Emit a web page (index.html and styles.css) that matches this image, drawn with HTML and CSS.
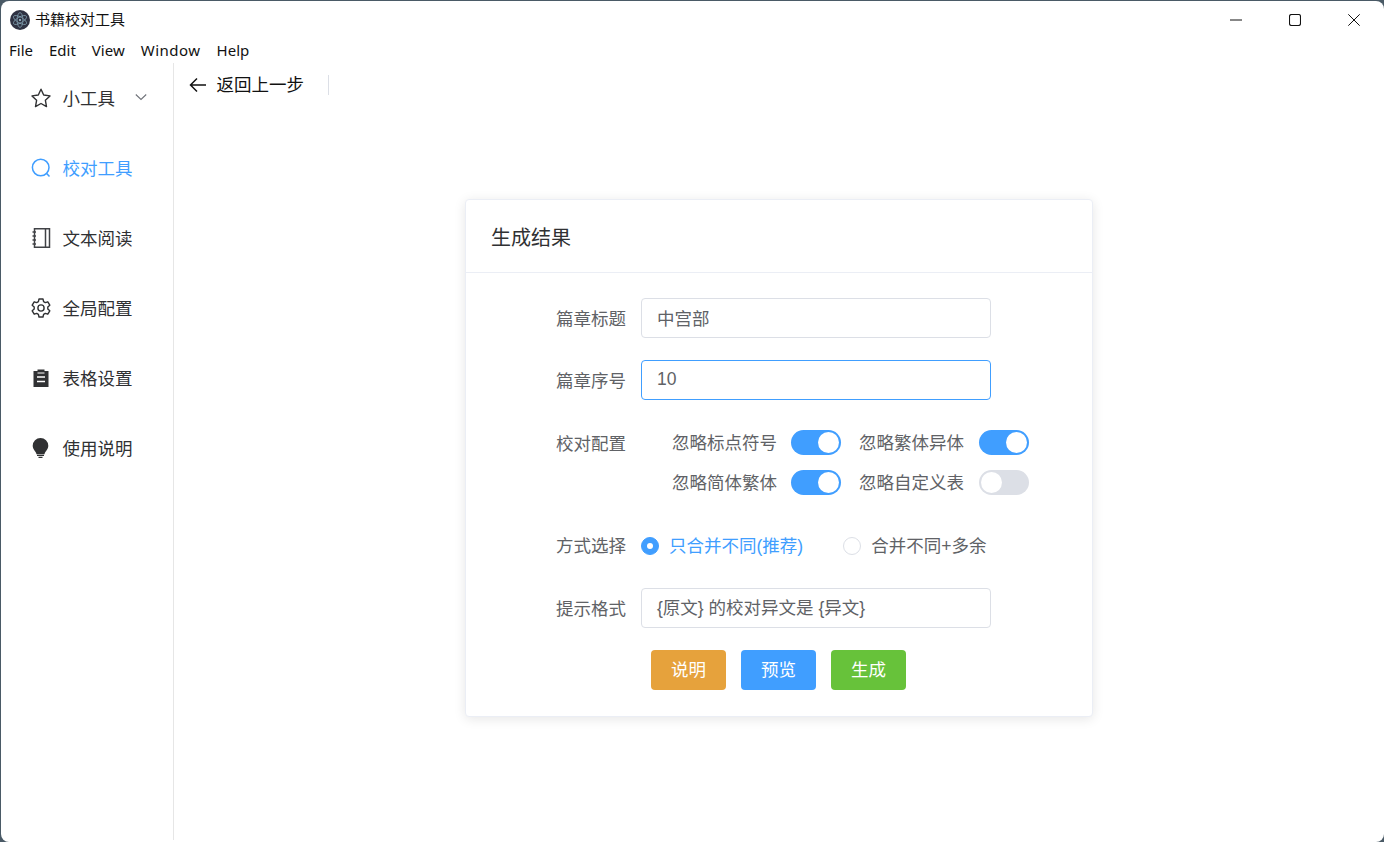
FILE: index.html
```html
<!DOCTYPE html>
<html lang="zh">
<head>
<meta charset="utf-8">
<title>书籍校对工具</title>
<link rel="stylesheet" href="styles.css">
</head>
<body>
<div class="window">
  <header class="titlebar">
    <svg class="app-logo" viewBox="0 0 20 20" width="20" height="20">
      <circle cx="10" cy="10" r="10" fill="#2f3242"/>
      <g fill="none" stroke="#7f9cac" stroke-width="0.8">
        <ellipse cx="10" cy="10" rx="7.400" ry="2.900" transform="rotate(30 10 10)"/>
        <ellipse cx="10" cy="10" rx="7.400" ry="2.900" transform="rotate(-30 10 10)"/>
        <ellipse cx="10" cy="10" rx="7.400" ry="2.900" transform="rotate(90 10 10)"/>
      </g>
      <circle cx="10" cy="10" r="1.100" fill="#a4c6d6"/>
    </svg>
    <span class="app-title">书籍校对工具</span>
    <div class="win-controls">
      <button class="win-btn" aria-label="minimize"><svg viewBox="0 0 12 12" width="12" height="12"><path d="M0 6h12" stroke="#111" stroke-width="1" fill="none"/></svg></button>
      <button class="win-btn" aria-label="maximize"><svg viewBox="0 0 12 12" width="12" height="12"><rect x=".5" y=".5" width="11" height="11" rx="2" stroke="#111" stroke-width="1.100" fill="none"/></svg></button>
      <button class="win-btn" aria-label="close"><svg viewBox="0 0 12 12" width="12" height="12"><path d="M.3.3l11.400 11.400M11.700.3L.3 11.700" stroke="#111" stroke-width="1" fill="none"/></svg></button>
    </div>
  </header>
  <nav class="menubar">
    <span class="menubar-item">File</span>
    <span class="menubar-item">Edit</span>
    <span class="menubar-item">View</span>
    <span class="menubar-item wide">Window</span>
    <span class="menubar-item">Help</span>
  </nav>
  <div class="app-body">
    <aside class="sidebar">
      <div class="side-item">
        <svg class="side-icon" viewBox="0 0 20 20"><path d="M10 1.200l2.700 5.800 6.300.9-4.600 4.400 1.100 6.300-5.500-3.100-5.500 3.100 1.100-6.300L1 7.900l6.300-.9z" fill="none" stroke="#303133" stroke-width="1.400" stroke-linejoin="round"/></svg>
        <span class="side-text">小工具</span>
        <svg class="chevron" viewBox="0 0 12 12"><path d="M.8 3.500l5.200 5 5.200-5" fill="none" stroke="#70737a" stroke-width="1.100"/></svg>
      </div>
      <div class="side-item active">
        <svg class="side-icon" viewBox="0 0 20 20"><circle cx="9.700" cy="9.500" r="8.300" fill="none" stroke="#409eff" stroke-width="1.500"/><path d="M15.700 15.500l2.800 3" stroke="#409eff" stroke-width="1.500" fill="none"/></svg>
        <span class="side-text">校对工具</span>
      </div>
      <div class="side-item">
        <svg class="side-icon" viewBox="0 0 20 20"><path d="M3.500.8h15v18.400h-15z M14.500.8v18.400" fill="none" stroke="#404246" stroke-width="1.500"/><path d="M1.500 4h3.500M1.500 8h3.500M1.500 12h3.500M1.500 16h3.500" stroke="#404246" stroke-width="1.300"/></svg>
        <span class="side-text">文本阅读</span>
      </div>
      <div class="side-item">
        <svg class="side-icon" viewBox="0 0 20 20"><path d="M8 1h4l.6 2.600 1.700 1 2.500-.8 2 3.400-2 1.800v2l2 1.800-2 3.400-2.500-.8-1.700 1L12 19H8l-.6-2.600-1.700-1-2.500.8-2-3.400 2-1.800V9L1.200 7.200l2-3.400 2.500.8 1.700-1z" fill="none" stroke="#303133" stroke-width="1.400" stroke-linejoin="round"/><circle cx="10" cy="10" r="3.100" fill="none" stroke="#303133" stroke-width="1.400"/></svg>
        <span class="side-text">全局配置</span>
      </div>
      <div class="side-item">
        <svg class="side-icon" viewBox="0 0 20 20"><path d="M6.500 1.500h7v1.500h4v16h-15V3h4z" fill="#303133"/><path d="M6 9h8M6 13.500h8" stroke="#fff" stroke-width="1.600"/><path d="M6.500 5h7" stroke="#fff" stroke-width="1"/></svg>
        <span class="side-text">表格设置</span>
      </div>
      <div class="side-item">
        <svg class="side-icon" viewBox="0 0 20 20"><path d="M9.500 0a7.800 7.800 0 0 1 7.800 7.800c0 3.700-3.100 5.400-3.800 8.400h-8C4.800 13.200 1.700 11.500 1.700 7.800A7.800 7.800 0 0 1 9.500 0z" fill="#303133"/><path d="M6 17.300h7M7.500 19.300h4" stroke="#303133" stroke-width="1.200"/></svg>
        <span class="side-text">使用说明</span>
      </div>
    </aside>
    <main class="content">
      <div class="page-header">
        <svg class="back-arrow" viewBox="0 0 18 16"><path d="M17 8H1.500M8 1.500L1.500 8 8 14.500" fill="none" stroke="#111" stroke-width="1.500"/></svg>
        <span class="back-text">返回上一步</span>
        <span class="divider"></span>
      </div>
      <section class="card">
        <div class="card-header">生成结果</div>
        <div class="card-body">
          <div class="form-row">
            <label class="form-label">篇章标题</label>
            <div class="input">中宫部</div>
          </div>
          <div class="form-row">
            <label class="form-label">篇章序号</label>
            <div class="input focused">10</div>
          </div>
          <div class="form-row top config-row">
            <label class="form-label config-label">校对配置</label>
            <div class="switch-grid">
              <div class="switch-cell"><span class="cell-text">忽略标点符号</span><span class="switch on"></span></div>
              <div class="switch-cell"><span class="cell-text">忽略繁体异体</span><span class="switch on"></span></div>
              <div class="switch-cell"><span class="cell-text">忽略简体繁体</span><span class="switch on"></span></div>
              <div class="switch-cell"><span class="cell-text">忽略自定义表</span><span class="switch"></span></div>
            </div>
          </div>
          <div class="form-row radio-row">
            <label class="form-label">方式选择</label>
            <div class="radio checked"><span class="radio-dot"></span><span class="cell-text">只合并不同(推荐)</span></div>
            <div class="radio"><span class="radio-dot"></span><span class="cell-text">合并不同+多余</span></div>
          </div>
          <div class="form-row">
            <label class="form-label">提示格式</label>
            <div class="input format">{原文} 的校对异文是 {异文}</div>
          </div>
          <div class="actions">
            <button class="btn warning">说明</button>
            <button class="btn primary">预览</button>
            <button class="btn success">生成</button>
          </div>
        </div>
      </section>
    </main>
  </div>
</div>
</body>
</html>
```
FILE: styles.css
```css
* { box-sizing: border-box; }
html, body { margin: 0; height: 100%; overflow: hidden; }
body {
  background: #4a5a66;
  padding: 1px 0 0 1px;
  font-family: "Liberation Sans", "Noto Sans CJK SC", sans-serif;
  font-size: 17.5px;
  color: #303133;
}
.window {
  width: 1383px;
  height: 841px;
  background: #fff;
  border-radius: 8px;
  display: flex;
  flex-direction: column;
  overflow: hidden;
}
.titlebar {
  height: 37px;
  display: flex;
  align-items: center;
  padding-left: 9px;
  flex: none;
}
.app-logo { flex: none; margin: 0 5px 0 0; }
.app-title { font-size: 15px; color: #111; margin: 0 0 2px 0; }
.win-controls { margin-left: auto; margin-right: 1px; display: flex; }
.win-btn {
  width: 59px;
  height: 36px;
  border: 0;
  background: none;
  padding: 0;
  display: flex;
  align-items: center;
  justify-content: center;
}
.menubar {
  height: 23px;
  margin-bottom: 2px;
  flex: none;
  display: flex;
  align-items: center;
  gap: 16px;
  padding-left: 8px;
  font-family: "Noto Sans", sans-serif;
  font-size: 15px;
  color: #111;
}
.menubar-item.wide { letter-spacing: .5px; }
.app-body { flex: 1; display: flex; min-height: 0; }
.sidebar {
  width: 173px;
  flex: none;
  border-right: 1px solid #e6e6e6;
  margin-bottom: 2px;
}
.side-item {
  height: 70px;
  display: flex;
  align-items: center;
  padding-left: 30px;
  gap: 11.6px;
  color: #303133;
}
.side-item.active { color: #409eff; }
.side-text { margin-bottom: 2px; }
.side-icon { width: 20px; height: 20px; flex: none; }
.chevron { width: 12px; height: 12px; margin-left: 8px; margin-top: -3px; }
.content { flex: 1; min-width: 0; display: flex; flex-direction: column; align-items: center; }
.page-header {
  align-self: stretch;
  height: 20px;
  margin-top: 12px;
  display: flex;
  align-items: center;
  padding-left: 15px;
  color: #111;
}
.back-arrow { width: 18px; height: 16px; margin-right: 9.500px; }
.back-text { margin-bottom: 4px; }
.divider { width: 1px; height: 20px; background: #dcdfe6; margin-left: 23.500px; }
.card {
  width: 628px;
  margin-top: 104px;
  border: 1px solid #ebeef5;
  border-radius: 4px;
  background: #fff;
  box-shadow: 0 2px 12px rgba(0, 0, 0, .1);
}
.card-header {
  height: 73px;
  padding-left: 25px;
  display: flex;
  align-items: center;
  font-size: 20px;
  border-bottom: 1px solid #ebeef5;
}
.card-body { padding: 25px 0 26px 90px; }
.form-row { display: flex; align-items: center; margin-bottom: 22px; color: #606266; }
.form-row.top { align-items: flex-start; }
.form-label { width: 71px; margin: 0 14px 2px 0; flex: none; white-space: nowrap; }
.input {
  width: 350px;
  height: 40px;
  border: 1px solid #dcdfe6;
  border-radius: 4px;
  padding: 0 15px 2px;
  display: flex;
  align-items: center;
  color: #606266;
  white-space: pre;
}
.input.focused { border-color: #409eff; }
.input.format { padding-bottom: 4px; }
.config-row { margin-top: 30px; margin-bottom: 38px; }
.config-label { line-height: 25px; margin-top: 2px; }
.switch-grid {
  display: grid;
  grid-template-columns: 169px 170px;
  column-gap: 18px;
  row-gap: 15px;
  padding-left: 31px;
}
.switch-cell { display: flex; align-items: center; justify-content: space-between; height: 25px; }
.cell-text { margin-bottom: 2px; }
.switch {
  width: 50px;
  height: 25px;
  border-radius: 13px;
  background: #dcdfe6;
  padding: 2px;
  display: flex;
}
.switch::after { content: ""; width: 21px; height: 21px; border-radius: 50%; background: #fff; }
.switch.on { background: #409eff; justify-content: flex-end; }
.radio-row { height: 25px; margin-bottom: 30px; }
.radio { display: flex; align-items: center; gap: 10px; margin-right: 40px; white-space: nowrap; }
.radio-dot {
  width: 18px;
  height: 18px;
  border-radius: 50%;
  border: 1px solid #dcdfe6;
  display: flex;
  align-items: center;
  justify-content: center;
  flex: none;
}
.radio.checked { color: #409eff; }
.radio.checked .radio-dot { background: #409eff; border-color: #409eff; }
.radio.checked .radio-dot::after { content: ""; width: 6px; height: 6px; border-radius: 50%; background: #fff; }
.actions { display: flex; gap: 15px; padding-left: 95px; }
.btn {
  width: 75px;
  height: 40px;
  border: 0;
  border-radius: 4px;
  color: #fff;
  font: inherit;
  padding: 0 0 4px;
}
.btn.warning { background: #e6a23c; }
.btn.primary { background: #409eff; }
.btn.success { background: #67c23a; }
```
